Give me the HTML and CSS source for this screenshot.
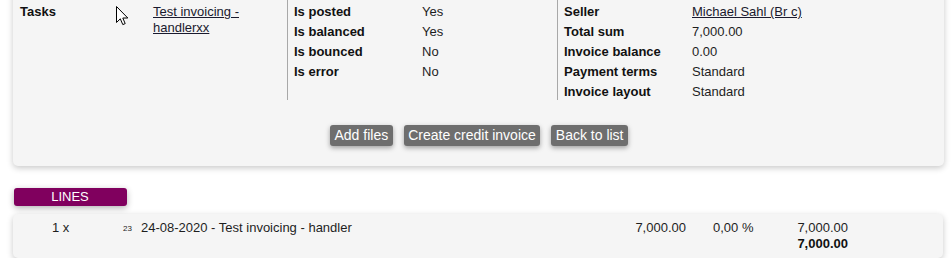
FILE: index.html
```html
<!DOCTYPE html>
<html lang="en">
<head>
<meta charset="utf-8">
<title>Invoice</title>
<link rel="stylesheet" href="styles.css">
</head>
<body>
<div class="page">
  <section class="card">
    <div class="info">
      <div class="col col-first">
        <div class="kv">
          <div class="label">Tasks</div>
          <div class="value"><a href="#">Test invoicing - handlerxx</a></div>
        </div>
      </div>
      <div class="col">
        <div class="kv">
          <div class="label">Is posted</div><div class="value">Yes</div>
          <div class="label">Is balanced</div><div class="value">Yes</div>
          <div class="label">Is bounced</div><div class="value">No</div>
          <div class="label">Is error</div><div class="value">No</div>
        </div>
      </div>
      <div class="col">
        <div class="kv">
          <div class="label">Seller</div><div class="value"><a href="#">Michael Sahl (Br c)</a></div>
          <div class="label">Total sum</div><div class="value">7,000.00</div>
          <div class="label">Invoice balance</div><div class="value">0.00</div>
          <div class="label">Payment terms</div><div class="value">Standard</div>
          <div class="label">Invoice layout</div><div class="value">Standard</div>
        </div>
      </div>
    </div>
    <div class="actions">
      <button class="btn" type="button">Add files</button>
      <button class="btn" type="button">Create credit invoice</button>
      <button class="btn" type="button">Back to list</button>
    </div>
  </section>

  <div class="section-head">
    <div class="badge">LINES</div>
  </div>

  <section class="lines">
    <div class="line">
      <div class="qty">1 x</div>
      <div class="code">23</div>
      <div class="desc">24-08-2020 - Test invoicing - handler</div>
      <div class="price">7,000.00</div>
      <div class="disc">0,00 %</div>
      <div class="total">7,000.00<br><strong>7,000.00</strong></div>
    </div>
  </section>

  <svg class="cursor" width="13" height="20" viewBox="0 0 13 20" aria-hidden="true">
    <path d="M0.5 0.5 L0.5 16.5 L4.3 12.8 L6.8 18.6 L9.2 17.6 L6.8 12 L11.8 12 Z" fill="#fff" stroke="#000" stroke-width="1" stroke-linejoin="miter"/>
  </svg>
</div>
</body>
</html>
```

FILE: styles.css
```css
* { box-sizing: border-box; }

html, body {
  margin: 0;
  padding: 0;
  background: #fff;
}

body {
  font-family: "Liberation Sans", Arial, sans-serif;
  font-size: 13px;
  color: #1e1e1e;
  overflow: hidden;
}

.page {
  position: relative;
  padding: 0 7px 0 13px;
}

.card {
  margin-top: -12px;
  padding: 12px 0 20px 0;
  background: #f5f5f5;
  border-radius: 5px;
  box-shadow: 0 2px 6px rgba(0, 0, 0, 0.22);
}

.info {
  display: flex;
}

.col {
  width: 270px;
  border-left: 1px solid #a8a8a8;
  padding-left: 6px;
}

.col-first {
  width: 274px;
  border-left: none;
  padding-left: 7px;
}

.kv {
  display: grid;
  grid-template-columns: 128px 1fr;
  line-height: 16px;
}

.col-first .kv {
  grid-template-columns: 133px 1fr;
}

.label,
.value {
  padding: 4px 0 0 0;
}

.label {
  font-weight: bold;
  color: #111;
}

.value a {
  color: #1a1a2e;
  text-decoration: underline;
}

.actions {
  display: flex;
  justify-content: center;
  gap: 11px;
  margin-top: 25px;
  padding-left: 1px;
}

.btn {
  font-family: "Liberation Sans", Arial, sans-serif;
  font-size: 14px;
  line-height: 21px;
  height: 21px;
  padding: 0 4.5px;
  border: none;
  border-radius: 3px;
  background: #6e6e6e;
  color: #fff;
  box-shadow: 0 2px 5px rgba(0, 0, 0, 0.35);
}

.section-head {
  margin-top: 15px;
  width: 608px;
  margin-left: -1px;
  padding: 7px 0 7px 2px;
  background: #fff;
}

.badge {
  width: 113px;
  height: 18px;
  line-height: 17px;
  background: #80005e;
  color: #fff;
  text-align: center;
  border-radius: 3px;
  box-shadow: 0 2px 6px rgba(0, 0, 0, 0.3);
  padding-right: 1px;
}

.lines {
  margin-top: 1px;
  margin-right: 1px;
  background: #f5f5f5;
  border-radius: 5px;
  box-shadow: 0 2px 6px rgba(0, 0, 0, 0.22);
  padding: 6px 95px 6px 39px;
}

.line {
  display: flex;
  line-height: 16px;
  color: #1e1e1e;
}

.qty {
  width: 71px;
}

.code {
  width: 18px;
  font-size: 8px;
  position: relative;
  top: 1px;
}

.desc {
  flex: 1;
}

.price {
  width: 100px;
  text-align: right;
  margin-right: 27px;
}

.disc {
  width: 49px;
}

.total {
  width: 86px;
  text-align: right;
}

.total strong {
  font-weight: bold;
  color: #111;
}

.cursor {
  position: absolute;
  left: 116px;
  top: 18px;
}
```
